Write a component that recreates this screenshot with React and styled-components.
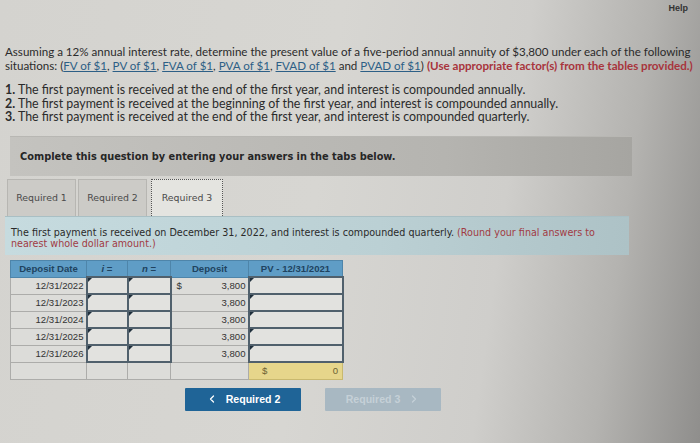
import React from "react";
import styled, { createGlobalStyle } from "styled-components";
import { ChevronLeft, ChevronRight } from "lucide-react";

const GlobalStyle = createGlobalStyle`
  html, body {
    margin: 0;
    padding: 0;
  }
  body {
    width: 700px;
    height: 443px;
    overflow: hidden;
  }
`;

const rows = [
  { date: "12/31/2022", deposit: "3,800", dollar: true },
  { date: "12/31/2023", deposit: "3,800" },
  { date: "12/31/2024", deposit: "3,800" },
  { date: "12/31/2025", deposit: "3,800" },
  { date: "12/31/2026", deposit: "3,800" },
];

const links = ["FV of $1", "PV of $1", "FVA of $1", "PVA of $1", "FVAD of $1"];

const App = () => {
  return (
    <Page>
      <GlobalStyle />
      <HelpBar>
        <Help>Help</Help>
      </HelpBar>

      <Question>
        <Line>
          Assuming a 12% annual interest rate, determine the present value of a
          five-period annual annuity of $3,800 under each of the following
        </Line>
        <Line>
          situations: (
          {links.map((l, i) => (
            <React.Fragment key={l}>
              <Link>{l}</Link>
              {i < links.length - 1 ? ", " : " "}
            </React.Fragment>
          ))}
          and <Link>PVAD of $1</Link>){" "}
          <Warn>(Use appropriate factor(s) from the tables provided.)</Warn>
        </Line>
      </Question>

      <List>
        <li>
          <Num>1.</Num> The first payment is received at the end of the first
          year, and interest is compounded annually.
        </li>
        <li>
          <Num>2.</Num> The first payment is received at the beginning of the
          first year, and interest is compounded annually.
        </li>
        <li>
          <Num>3.</Num> The first payment is received at the end of the first
          year, and interest is compounded quarterly.
        </li>
      </List>

      <PromptBox>
        Complete this question by entering your answers in the tabs below.
      </PromptBox>

      <Tabs>
        <Tab>Required 1</Tab>
        <Tab>Required 2</Tab>
        <Tab active>Required 3</Tab>
      </Tabs>

      <InfoPanel>
        <InfoLine>
          The first payment is received on December 31, 2022, and interest is
          compounded quarterly. <InfoRed>(Round your final answers to</InfoRed>
        </InfoLine>
        <InfoLine>
          <InfoRed>nearest whole dollar amount.)</InfoRed>
        </InfoLine>
      </InfoPanel>

      <Table>
        <thead>
          <tr>
            <Th>Deposit Date</Th>
            <Th>
              <i>i</i> =
            </Th>
            <Th>
              <i>n</i> =
            </Th>
            <Th>Deposit</Th>
            <Th>PV - 12/31/2021</Th>
          </tr>
        </thead>
        <tbody>
          {rows.map((r) => (
            <tr key={r.date}>
              <Td align="right">{r.date}</Td>
              <InputTd>
                <Flag />
              </InputTd>
              <InputTd>
                <Flag />
              </InputTd>
              <Td>
                <Money>
                  <span>{r.dollar ? "$" : ""}</span>
                  <span>{r.deposit}</span>
                </Money>
              </Td>
              <InputTd>
                <Flag />
              </InputTd>
            </tr>
          ))}
          <tr>
            <Td />
            <Td />
            <Td />
            <Td />
            <TotalTd>
              <Money>
                <span>$</span>
                <span>0</span>
              </Money>
            </TotalTd>
          </tr>
        </tbody>
      </Table>

      <Buttons>
        <NavButton>
          <ChevronLeft size={12} strokeWidth={2.5} /> Required 2
        </NavButton>
        <NavButton disabled>
          Required 3 <ChevronRight size={12} strokeWidth={2.5} />
        </NavButton>
      </Buttons>
    </Page>
  );
};

const Page = styled.div`
  width: 700px;
  height: 443px;
  box-sizing: border-box;
  padding: 0 0 0 5px;
  background: linear-gradient(
    98deg,
    #d4d3cf 0%,
    #d7d6d2 45%,
    #cfcecb 70%,
    #b4b3b0 86%,
    #8f8e8c 100%
  );
  font-family: "Lato", "Liberation Sans", sans-serif;
  color: #2b2b2b;
`;

const HelpBar = styled.div`
  display: flex;
  justify-content: flex-end;
  padding: 3px 12px 0 0;
  height: 26px;
`;

const Help = styled.span`
  font-family: "Liberation Sans", sans-serif;
  font-weight: bold;
  font-size: 9px;
  color: #333;
`;

const Question = styled.div`
  margin: 16px 0 0;
  font-size: 11.6px;
  width: 695px;
`;

const Line = styled.div`
  height: 14px;
  line-height: 14px;
  white-space: nowrap;
`;

const Link = styled.span`
  color: #2d5f86;
  text-decoration: underline;
`;

const Warn = styled.span`
  color: #a8343c;
  font-weight: bold;
`;

const Num = styled.b`
  font-weight: bold;
`;

const List = styled.ol`
  list-style: none;
  margin: 10px 0 0;
  padding: 0;
  font-size: 12.4px;
  line-height: 13.5px;
`;

const PromptBox = styled.div`
  margin: 12px 0 0 5px;
  width: 622px;
  height: 40px;
  box-sizing: border-box;
  padding: 0 0 0 10px;
  display: flex;
  align-items: center;
  background: linear-gradient(90deg, #c4c3bf, #b5b4b0 70%, #a6a5a1);
  border-top: 1px solid #b8b7b3;
  font-family: "DejaVu Sans", sans-serif;
  font-weight: bold;
  font-size: 9.8px;
  color: #262626;
`;

const Tabs = styled.div`
  display: flex;
  gap: 2px;
  margin: 3px 0 0 2px;
  height: 37px;
`;

const Tab = styled.div`
  width: ${(p) => (p.active ? "72px" : "69px")};
  margin-left: ${(p) => (p.active ? "2px" : "0")};
  display: flex;
  align-items: center;
  justify-content: center;
  box-sizing: border-box;
  font-family: "DejaVu Sans", sans-serif;
  font-size: 9.4px;
  color: #4a4a4a;
  background: ${(p) => (p.active ? "#e4e4e0" : "#cccbc7")};
  border: ${(p) => (p.active ? "1px dotted #555" : "1px solid #b7b6b2")};
  border-bottom: none;
`;

const InfoPanel = styled.div`
  width: 624px;
  box-sizing: border-box;
  padding: 10px 6px 5px 6px;
  background: linear-gradient(90deg, #c6dbdf, #bbd0d4 60%, #adc2c6);
  border-top: 1px solid #a9bfc4;
  font-family: "DejaVu Sans", sans-serif;
  font-size: 9.6px;
  color: #2a2a2a;
`;

const InfoLine = styled.div`
  height: 11.5px;
  line-height: 11.5px;
  white-space: nowrap;
`;

const InfoRed = styled.span`
  color: #a13b44;
`;

const Table = styled.table`
  margin: 5px 0 0 5px;
  border-collapse: collapse;
  font-family: "Liberation Sans", sans-serif;
  font-size: 9.6px;
  color: #333;
  td:nth-child(1),
  th:nth-child(1) {
    width: 76px;
  }
  td:nth-child(2),
  th:nth-child(2) {
    width: 41px;
  }
  td:nth-child(3),
  th:nth-child(3) {
    width: 43px;
  }
  td:nth-child(4),
  th:nth-child(4) {
    width: 78px;
  }
  td:nth-child(5),
  th:nth-child(5) {
    width: 94px;
  }
`;

const Th = styled.th`
  height: 17px;
  padding: 0;
  background: #5f9dc6;
  border: 1px solid #4e85aa;
  color: #20435f;
  font-weight: bold;
  text-align: center;
  box-sizing: border-box;
`;

const Td = styled.td`
  height: 17px;
  padding: 0 2px;
  box-sizing: border-box;
  background: #dcdcd9;
  border: 1px solid #acacaa;
  text-align: ${(p) => p.align || "left"};
`;

const InputTd = styled.td`
  height: 17px;
  padding: 0;
  position: relative;
  box-sizing: border-box;
  background: #e2e2df;
  border: 2px solid #50606c;
`;

const Flag = styled.span`
  position: absolute;
  left: 0;
  top: 0;
  width: 0;
  height: 0;
  border-top: 4px solid #1f2f3c;
  border-right: 4px solid transparent;
`;

const TotalTd = styled.td`
  height: 17px;
  padding: 0 4px 0 10px;
  box-sizing: border-box;
  background: #e6d68b;
  border: 1px solid #c9b96e;
  color: #6b6233;
`;

const Money = styled.div`
  display: flex;
  justify-content: space-between;
  padding-left: 3px;
`;

const Buttons = styled.div`
  display: flex;
  gap: 24px;
  margin: 8px 0 0 180px;
`;

const NavButton = styled.button`
  width: 116px;
  height: 23px;
  border: none;
  border-radius: 1px;
  font-family: "Liberation Sans", sans-serif;
  font-weight: bold;
  font-size: 10.6px;
  display: flex;
  align-items: center;
  justify-content: center;
  gap: 8px;
  background: ${(p) => (p.disabled ? "#a8b8c2" : "#1f6497")};
  color: ${(p) => (p.disabled ? "#c5d0d7" : "#ffffff")};
`;

export default App;
